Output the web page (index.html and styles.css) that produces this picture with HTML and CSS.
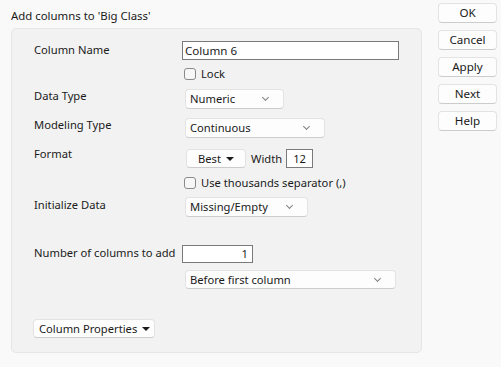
FILE: index.html
```html
<!DOCTYPE html>
<html lang="en">
<head>
  <meta charset="UTF-8" />
  <title>Add columns to 'Big Class'</title>
  <link rel="stylesheet" href="styles.css">
</head>
<body>
  <div class="dialog">
    <div class="main">
      <div class="title">Add columns to 'Big Class'</div>
      <div class="panel">
        <div class="row r-name">
          <div class="label">Column Name</div>
          <div class="text-input name-input">Column 6</div>
        </div>
        <div class="row r-lock">
          <div class="label"></div>
          <label class="check"><span class="box"></span>Lock</label>
        </div>
        <div class="row r-type">
          <div class="label">Data Type</div>
          <div class="combo w-numeric">Numeric<span class="chev"></span></div>
        </div>
        <div class="row r-model">
          <div class="label">Modeling Type</div>
          <div class="combo w-continuous">Continuous<span class="chev"></span></div>
        </div>
        <div class="row r-format">
          <div class="label">Format</div>
          <div class="format">
            <div class="menu-btn best">Best<span class="tri"></span></div>
            <span class="width-label">Width</span>
            <div class="text-input width-input">12</div>
          </div>
        </div>
        <div class="row r-sep">
          <div class="label"></div>
          <label class="check"><span class="box"></span>Use thousands separator (,)</label>
        </div>
        <div class="row r-init">
          <div class="label">Initialize Data</div>
          <div class="combo w-missing">Missing/Empty<span class="chev"></span></div>
        </div>
        <div class="row r-count">
          <div class="label">Number of columns to add</div>
          <div class="text-input count-input">1</div>
        </div>
        <div class="row r-pos">
          <div class="label"></div>
          <div class="combo w-before">Before first column<span class="chev"></span></div>
        </div>
        <div class="row r-props">
          <div class="menu-btn props">Column Properties<span class="tri"></span></div>
        </div>
      </div>
    </div>
    <div class="actions">
      <button class="btn">OK</button>
      <button class="btn">Cancel</button>
      <button class="btn">Apply</button>
      <button class="btn">Next</button>
      <button class="btn">Help</button>
    </div>
  </div>
</body>
</html>
```

FILE: styles.css
```css
body {
  margin: 0;
  background: #f9f9f9;
  font-family: 'Noto Sans', sans-serif;
  font-size: 11.2px;
  color: #1a1a1a;
}
.dialog {
  display: flex;
  padding: 0 4px 0 11px;
  height: 367px;
  box-sizing: border-box;
}
.main {
  width: 412px;
}
.title {
  height: 25px;
  padding-top: 3px;
  line-height: 25px;
  font-size: 11.4px;
}
.panel {
  background: #f2f2f2;
  border: 1px solid #e6e6e6;
  border-radius: 5px;
  height: 325px;
  box-sizing: border-box;
  padding: 12px 0 0 22px;
}
.row {
  display: flex;
  align-items: flex-start;
  white-space: nowrap;
}
.label {
  width: 150px;
  flex-shrink: 0;
  line-height: 15px;
  height: 1px;
}
.r-name .label { padding-top: 1px; }
.r-type .label,
.r-model .label { margin-top: -1px; }
.r-format .label { margin-top: -3px; }
.r-name { height: 19px; }
.r-lock { margin-top: 8px; height: 12px; }
.r-type { margin-top: 9px; height: 20px; }
.r-model { margin-top: 9px; height: 20px; }
.r-format { margin-top: 11px; height: 19px; }
.r-sep { margin-top: 9px; height: 12px; }
.r-init { margin-top: 8px; height: 20px; }
.r-count { margin-top: 28px; height: 18px; }
.r-pos { margin-top: 7px; height: 19px; }
.r-props { margin-top: 30px; height: 19px; }
.r-props .menu-btn { margin-left: -1px; }
.text-input {
  background: #fff;
  border: 1px solid #7a7a7a;
  height: 19px;
  box-sizing: border-box;
  line-height: 17px;
  padding: 0 2px;
}
.name-input {
  width: 217px;
  margin-left: -2px;
  font-size: 11.6px;
}
.count-input {
  width: 71px;
  margin-left: -2px;
  height: 18px;
  line-height: 16px;
  text-align: right;
  padding-right: 4px;
}
.width-input {
  width: 27px;
  height: 19px;
  text-align: center;
}
.check {
  display: flex;
  align-items: center;
  height: 12px;
  line-height: 12px;
}
.box {
  width: 12px;
  height: 12px;
  box-sizing: border-box;
  border: 1px solid #8a8a8a;
  border-radius: 3px;
  background: #f7f7f7;
  margin-right: 5px;
}
.combo, .menu-btn {
  position: relative;
  background: #fdfdfd;
  border: 1px solid #e3e3e3;
  border-bottom-color: #cccccc;
  border-radius: 4px;
  height: 20px;
  box-sizing: border-box;
  line-height: 18px;
  padding-left: 4px;
  margin-left: 1px;
}
.w-numeric { width: 99px; }
.w-continuous { width: 140px; }
.w-missing { width: 123px; }
.w-before { width: 211px; height: 19px; line-height: 17px; }
.chev {
  position: absolute;
  right: 15px;
  top: 5px;
  width: 4px;
  height: 4px;
  border-right: 1px solid #808080;
  border-bottom: 1px solid #808080;
  transform: rotate(45deg);
}
.format {
  display: flex;
  align-items: center;
}
.menu-btn {
  display: flex;
  align-items: center;
  height: 19px;
  padding: 0 5px;
}
.best {
  width: 60px;
  justify-content: center;
  margin-left: 2px;
}
.props {
  width: 122px;
  padding-left: 5px;
}
.tri {
  width: 0;
  height: 0;
  border-left: 4px solid transparent;
  border-right: 4px solid transparent;
  border-top: 4px solid #1a1a1a;
  margin-left: 5px;
}
.width-label {
  margin: 0 4px 0 5px;
}
.actions {
  display: flex;
  flex-direction: column;
  gap: 7px;
  padding-top: 3px;
  margin-left: 16px;
}
.btn {
  width: 59px;
  height: 20px;
  background: #fdfdfd;
  border: 1px solid #e3e3e3;
  border-bottom-color: #cccccc;
  border-radius: 4px;
  font-family: 'Noto Sans', sans-serif;
  font-size: 11.6px;
  color: #1a1a1a;
  padding: 0;
  line-height: 18px;
}
```
